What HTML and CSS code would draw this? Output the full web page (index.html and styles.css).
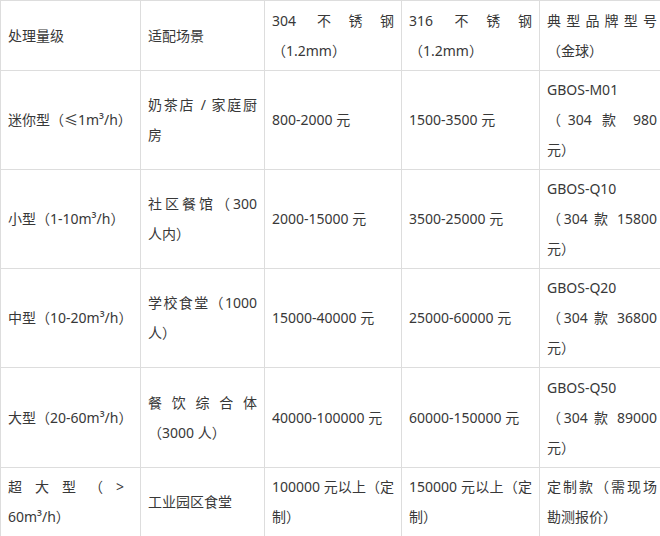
FILE: index.html
```html
<!DOCTYPE html>
<html lang="zh-CN">
<head>
<meta charset="utf-8">
<title>处理量级</title>
<link rel="stylesheet" href="styles.css">
</head>
<body>
<table class="spec">
  <colgroup>
    <col class="c1"><col class="c2"><col class="c3"><col class="c4"><col class="c5">
  </colgroup>
  <tbody>
    <tr class="head">
      <td>处理量级</td>
      <td>适配场景</td>
      <td>304 不锈钢（1.2mm）</td>
      <td>316 不锈钢（1.2mm）</td>
      <td>典型品牌型号（金球）</td>
    </tr>
    <tr>
      <td>迷你型（≤1m³/h）</td>
      <td>奶茶店 / 家庭厨房</td>
      <td>800-2000 元</td>
      <td>1500-3500 元</td>
      <td><span class="model">GBOS-M01</span>（304 款 980 元）</td>
    </tr>
    <tr>
      <td>小型（1-10m³/h）</td>
      <td>社区餐馆（300 人内）</td>
      <td>2000-15000 元</td>
      <td>3500-25000 元</td>
      <td><span class="model">GBOS-Q10</span>（304 款 15800 元）</td>
    </tr>
    <tr>
      <td>中型（10-20m³/h）</td>
      <td>学校食堂（1000 人）</td>
      <td>15000-40000 元</td>
      <td>25000-60000 元</td>
      <td><span class="model">GBOS-Q20</span>（304 款 36800 元）</td>
    </tr>
    <tr class="tall">
      <td>大型（20-60m³/h）</td>
      <td>餐饮综合体（3000 人）</td>
      <td>40000-100000 元</td>
      <td>60000-150000 元</td>
      <td><span class="model">GBOS-Q50</span>（304 款 89000 元）</td>
    </tr>
    <tr>
      <td class="tight">超大型（&gt; 60m³/h）</td>
      <td>工业园区食堂</td>
      <td>100000 元以上（定制）</td>
      <td>150000 元以上（定制）</td>
      <td>定制款（需现场勘测报价）</td>
    </tr>
  </tbody>
</table>
</body>
</html>
```

FILE: styles.css
```css
html, body {
  margin: 0;
  padding: 0;
  background: #ffffff;
  overflow: hidden;
}

.spec {
  border-collapse: collapse;
  table-layout: fixed;
  width: 664px;
  font-family: "Noto Sans", "Noto Sans CJK SC", sans-serif;
  font-size: 14px;
  line-height: 30px;
  color: #383838;
}

.c1 { width: 140px; }
.c2 { width: 124px; }
.c3 { width: 137px; }
.c4 { width: 138px; }
.c5 { width: 125px; }

.spec td {
  border: 1px solid #dddddd;
  padding: 4px 7px;
  vertical-align: middle;
  text-align: justify;
  text-spacing-trim: space-all;
}

.spec .head td,
.spec .tall td {
  padding-top: 5px;
}

.spec td.tight {
  padding-right: 16px;
}

.model {
  display: block;
}
```
